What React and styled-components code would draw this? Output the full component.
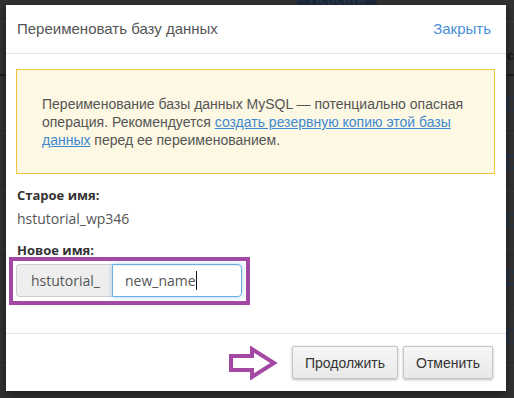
import styled, { createGlobalStyle } from 'styled-components'

const GlobalStyle = createGlobalStyle`
  html, body {
    margin: 0;
    padding: 0;
    background: #323232;
  }
  * {
    box-sizing: border-box;
  }
`

const Screen = styled.div`
  position: relative;
  width: 514px;
  height: 398px;
  overflow: hidden;
  background: #323232;
  font-family: "Liberation Sans", Arial, sans-serif;
`

/* dimmed page behind the dialog */
const PageTop = styled.div`
  display: flex;
  height: 22px;
  padding-left: 297px;
  border-bottom: 1px solid #3e3e3e;
`

const GoButton = styled.div`
  width: 80px;
  height: 22px;
  margin-top: -14px;
  background: #1c2a3a;
  color: #2c3c4e;
  font-size: 14px;
  line-height: 26px;
  text-align: center;
`

const TableHead = styled.div`
  height: 54px;
  padding: 26px 0 0 507px;
  border-bottom: 2px solid #1e1e1e;
  color: #141414;
  font-weight: 700;
  font-size: 13px;
  white-space: nowrap;
`

const TableRow = styled.div`
  height: 58px;
  padding: 21px 0 0 506px;
  border-bottom: 1px solid #3a3a3a;
`

const RowCheck = styled.div`
  width: 14px;
  height: 14px;
  border: 2px solid #22344a;
`

/* dialog */
const Modal = styled.div`
  position: absolute;
  left: 6px;
  top: 5px;
  width: 500px;
  background: #fff;
  box-shadow: 0 3px 9px rgba(0, 0, 0, 0.5);
`

const Header = styled.div`
  display: flex;
  align-items: center;
  justify-content: space-between;
  height: 49px;
  padding: 0 15px 1px 11px;
  border-bottom: 1px solid #e5e5e5;
`

const Title = styled.div`
  font-size: 15px;
  color: #555;
`

const CloseLink = styled.a`
  font-size: 15px;
  color: #4a8fd6;
  text-decoration: none;
  cursor: pointer;
`

const Body = styled.div`
  display: flex;
  flex-direction: column;
  align-items: flex-start;
  padding: 15px 11px 28px 10px;
`

const Alert = styled.div`
  align-self: stretch;
  margin-bottom: 12px;
  padding: 25px 25px 24px 25px;
  border: 1px solid #f0c63e;
  background: #fcf8e3;
  color: #555;
  font-size: 14px;
  line-height: 18px;
`

const AlertLink = styled.a`
  color: #3d88d2;
  text-decoration: underline;
  cursor: pointer;
`

const Label = styled.div`
  margin: 0 0 6px 1px;
  font-family: "Open Sans", sans-serif;
  font-weight: 700;
  font-size: 13px;
  line-height: 18px;
  color: #333;
`

const Value = styled.div`
  margin: 0 0 13px 1px;
  font-family: "Open Sans", sans-serif;
  font-size: 14px;
  line-height: 18px;
  color: #555;
`

const HighlightFrame = styled.div`
  display: flex;
  margin: -8px 0 0 -7px;
  padding: 3px 4px 4px 3px;
  border: 4px solid #a349a4;
`

const Addon = styled.div`
  display: flex;
  align-items: center;
  height: 33px;
  padding: 0 12px 0 14px;
  border: 1px solid #ccc;
  border-right: 0;
  border-radius: 4px 0 0 4px;
  background: #eee;
  font-family: "Open Sans", sans-serif;
  font-size: 14px;
  color: #555;
`

const NameInput = styled.div`
  display: flex;
  align-items: center;
  width: 130px;
  height: 33px;
  padding: 0 12px;
  border: 1px solid #66afe9;
  border-radius: 0 4px 4px 0;
  box-shadow: inset 0 1px 1px rgba(0, 0, 0, 0.075), 0 0 5px rgba(102, 175, 233, 0.55);
  font-family: "Open Sans", sans-serif;
  font-size: 14px;
  color: #555;
`

const Caret = styled.span`
  display: inline-block;
  width: 1px;
  height: 19px;
  background: #111;
`

const Footer = styled.div`
  display: flex;
  align-items: center;
  justify-content: flex-end;
  gap: 5px;
  padding: 12px 13px 12px;
  border-top: 1px solid #e5e5e5;
`

const Arrow = styled.svg`
  margin: 0 9px -1px 0;
`

const Button = styled.button`
  height: 33px;
  padding: 0 12px;
  border: 1px solid #c4c4c4;
  border-radius: 2px;
  background: linear-gradient(#f7f7f7, #e8e8e8);
  box-shadow: 0 1px 3px rgba(0, 0, 0, 0.25);
  font-family: "Liberation Sans", Arial, sans-serif;
  font-size: 14px;
  color: #333;
  cursor: pointer;
`

function App() {
  return (
    <Screen>
      <GlobalStyle />
      <PageTop>
        <GoButton>Перейти</GoButton>
      </PageTop>
      <TableHead>ст</TableHead>
      {[0, 1, 2, 3, 4].map(i => (
        <TableRow key={i}>
          <RowCheck />
        </TableRow>
      ))}

      <Modal>
        <Header>
          <Title>Переименовать базу данных</Title>
          <CloseLink>Закрыть</CloseLink>
        </Header>
        <Body>
          <Alert>
            Переименование базы данных MySQL — потенциально опасная операция. Рекомендуется{' '}
            <AlertLink>создать резервную копию этой базы данных</AlertLink> перед ее переименованием.
          </Alert>
          <Label>Старое имя:</Label>
          <Value>hstutorial_wp346</Value>
          <Label>Новое имя:</Label>
          <HighlightFrame>
            <Addon>hstutorial_</Addon>
            <NameInput>
              new_name<Caret />
            </NameInput>
          </HighlightFrame>
        </Body>
        <Footer>
          <Arrow width="50" height="34" viewBox="0 0 50 34">
            <polygon
              points="3,10 24,10 24,3 46,17 24,31 24,24 3,24"
              fill="#fff"
              stroke="#a349a4"
              strokeWidth="4"
            />
          </Arrow>
          <Button>Продолжить</Button>
          <Button>Отменить</Button>
        </Footer>
      </Modal>
    </Screen>
  )
}

export default App
